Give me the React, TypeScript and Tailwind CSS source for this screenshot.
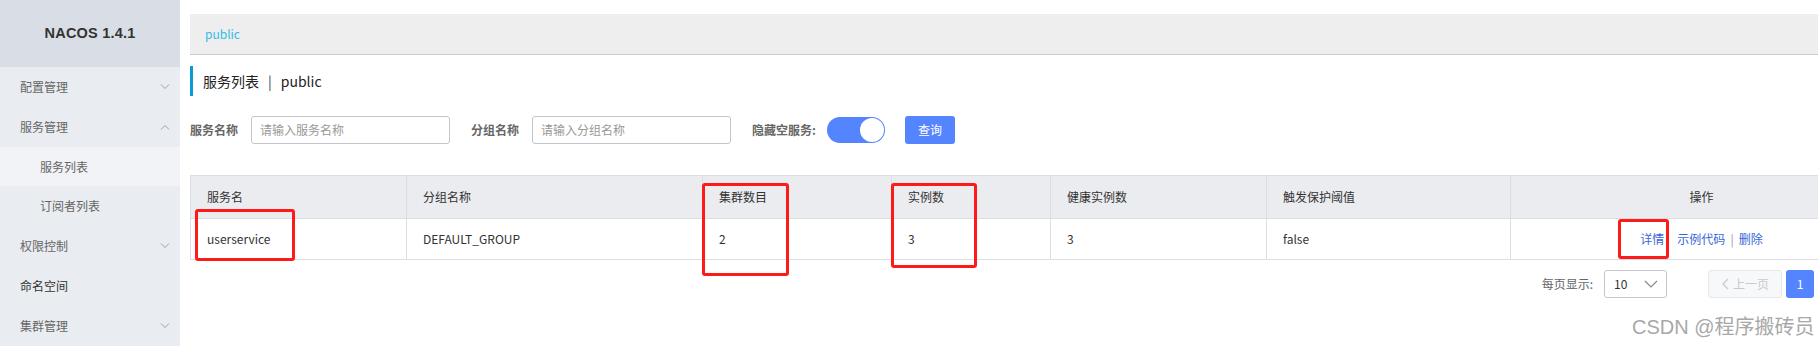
import React from "react";

const Chevron = ({ up = false }: { up?: boolean }) => (
  <svg width="10" height="6" viewBox="0 0 10 6" className="shrink-0">
    {up ? (
      <path d="M1 5.5 L5 1.5 L9 5.5" fill="none" stroke="#9aa0a8" strokeWidth="1" />
    ) : (
      <path d="M1 0.5 L5 4.5 L9 0.5" fill="none" stroke="#9aa0a8" strokeWidth="1" />
    )}
  </svg>
);

const MenuItem = ({
  label,
  chevron,
  dark = false,
}: {
  label: string;
  chevron?: "up" | "down";
  dark?: boolean;
}) => (
  <div className="h-[40px] flex items-center justify-between pl-[20px] pr-[10px]">
    <span className={dark ? "text-[12px] text-[#333]" : "text-[12px] text-[#666]"}>{label}</span>
    {chevron && <Chevron up={chevron === "up"} />}
  </div>
);

const cols = [
  { w: 216, h: "服务名", v: "userservice" },
  { w: 296, h: "分组名称", v: "DEFAULT_GROUP" },
  { w: 189, h: "集群数目", v: "2" },
  { w: 159, h: "实例数", v: "3" },
  { w: 216, h: "健康实例数", v: "3" },
  { w: 244, h: "触发保护阈值", v: "false" },
];

export default function App() {
  return (
    <div className="relative w-[1818px] h-[346px] overflow-hidden flex bg-white font-['Noto_Sans_CJK_SC','Noto_Sans',sans-serif]">
      {/* Sidebar */}
      <div className="w-[180px] shrink-0 h-full bg-[#e9ecf0] flex flex-col">
        <div className="h-[67px] bg-[#d9dde5] flex items-center justify-center">
          <span className="font-['Liberation_Sans',sans-serif] font-bold text-[14.5px] text-[#333] tracking-[0.2px]">
            NACOS 1.4.1
          </span>
        </div>
        <MenuItem label="配置管理" chevron="down" />
        <MenuItem label="服务管理" chevron="up" />
        <div className="h-[40px] flex items-center pl-[40px] bg-[#f2f3f6]">
          <span className="text-[12px] text-[#666]">服务列表</span>
        </div>
        <div className="h-[40px] flex items-center pl-[40px]">
          <span className="text-[12px] text-[#666]">订阅者列表</span>
        </div>
        <MenuItem label="权限控制" chevron="down" />
        <MenuItem label="命名空间" dark />
        <MenuItem label="集群管理" chevron="down" />
      </div>

      {/* Main */}
      <div className="flex-1 min-w-0 pl-[10px] pt-[14px] flex flex-col">
        <div className="h-[41px] shrink-0 bg-[#eeeeee] border-b border-[#cccccc] flex items-center pl-[15px]">
          <span className="text-[12px] text-[#33bbe6]">public</span>
        </div>

        <div className="mt-[11px] h-[30px] shrink-0 border-l-[3px] border-[#0a9bd6] flex items-center pl-[10px] text-[14px] text-[#222]">
          <span>服务列表</span>
          <span className="mx-[9px] text-[#444]">|</span>
          <span>public</span>
        </div>

        <div className="mt-[20px] h-[28px] shrink-0 flex items-center">
          <span className="text-[12px] font-bold text-[#666]">服务名称</span>
          <div className="ml-[13px] w-[199px] h-[28px] border border-[#c4c6cf] rounded-[3px] flex items-center pl-[8px]">
            <span className="text-[12px] text-[#999]">请输入服务名称</span>
          </div>
          <span className="ml-[21px] text-[12px] font-bold text-[#666]">分组名称</span>
          <div className="ml-[13px] w-[199px] h-[28px] border border-[#c4c6cf] rounded-[3px] flex items-center pl-[8px]">
            <span className="text-[12px] text-[#999]">请输入分组名称</span>
          </div>
          <span className="ml-[21px] text-[12px] font-bold text-[#666]">隐藏空服务:</span>
          <div className="ml-[11px] w-[58px] h-[26px] rounded-full bg-[#5584ff] flex items-center justify-end pr-[1px]">
            <div className="w-[24px] h-[24px] rounded-full bg-white" />
          </div>
          <div className="ml-[20px] w-[50px] h-[28px] rounded-[3px] bg-[#5584ff] flex items-center justify-center">
            <span className="text-[12px] text-white">查询</span>
          </div>
        </div>

        <div className="mt-[31px] shrink-0 w-[1702px]">
          <table className="border-collapse table-fixed w-[1702px] text-[12px] text-[#333]">
            <colgroup>
              {cols.map((c) => (
                <col key={c.h} style={{ width: c.w }} />
              ))}
              <col style={{ width: 382 }} />
            </colgroup>
            <thead>
              <tr className="bg-[#ebecf0] h-[43px]">
                {cols.map((c) => (
                  <th key={c.h} className="border border-[#dcdee3] text-left font-normal pl-[16px]">
                    {c.h}
                  </th>
                ))}
                <th className="border border-[#dcdee3] text-center font-normal">操作</th>
              </tr>
            </thead>
            <tbody>
              <tr className="h-[41px]">
                {cols.map((c) => (
                  <td key={c.h} className="border border-[#dcdee3] pl-[16px]">
                    {c.v}
                  </td>
                ))}
                <td className="border border-[#dcdee3] text-center">
                  <span className="text-[#3766d9]">详情</span>
                  <span className="text-[#3766d9] ml-[13px]">示例代码</span>
                  <span className="text-[#999] mx-[5px]">|</span>
                  <span className="text-[#3766d9]">删除</span>
                </td>
              </tr>
            </tbody>
          </table>
        </div>

        <div className="mt-[10px] h-[28px] shrink-0 flex items-center justify-end pr-[4px]">
          <span className="text-[12px] text-[#666]">每页显示:</span>
          <div className="ml-[11px] w-[63px] h-[28px] border border-[#c4c6cf] rounded-[3px] flex items-center justify-between pl-[9px] pr-[8px]">
            <span className="text-[12px] text-[#333]">10</span>
            <svg width="14" height="8" viewBox="0 0 14 8">
              <path d="M1 1 L7 7 L13 1" fill="none" stroke="#888" strokeWidth="1.2" />
            </svg>
          </div>
          <div className="ml-[41px] w-[74px] h-[28px] border border-[#e6e7eb] bg-[#f7f8fa] rounded-[3px] flex items-center justify-center gap-[4px]">
            <svg width="8" height="12" viewBox="0 0 8 12">
              <path d="M7 1 L2 6 L7 11" fill="none" stroke="#c8cad0" strokeWidth="1.3" />
            </svg>
            <span className="text-[12px] text-[#c8cad0]">上一页</span>
          </div>
          <div className="ml-[4px] w-[28px] h-[28px] rounded-[3px] bg-[#5584ff] flex items-center justify-center">
            <span className="text-[12px] text-white">1</span>
          </div>
        </div>
      </div>

      {/* annotation boxes */}
      <div className="absolute left-[195px] top-[209px] w-[100px] h-[52px] border-[3px] border-[#ff1a1a] rounded-[3px]" />
      <div className="absolute left-[702px] top-[183px] w-[87px] h-[93px] border-[3px] border-[#ff1a1a] rounded-[3px]" />
      <div className="absolute left-[891px] top-[183px] w-[86px] h-[85px] border-[3px] border-[#ff1a1a] rounded-[3px]" />
      <div className="absolute left-[1618px] top-[219px] w-[51px] h-[40px] border-[3px] border-[#ff1a1a] rounded-[3px]" />

      {/* watermark */}
      <div className="absolute left-[1632px] top-[314px] text-[20px] leading-[26px] text-[#a8a8a8] font-['Liberation_Sans','Noto_Sans_CJK_SC',sans-serif]">
        CSDN @程序搬砖员
      </div>
    </div>
  );
}
